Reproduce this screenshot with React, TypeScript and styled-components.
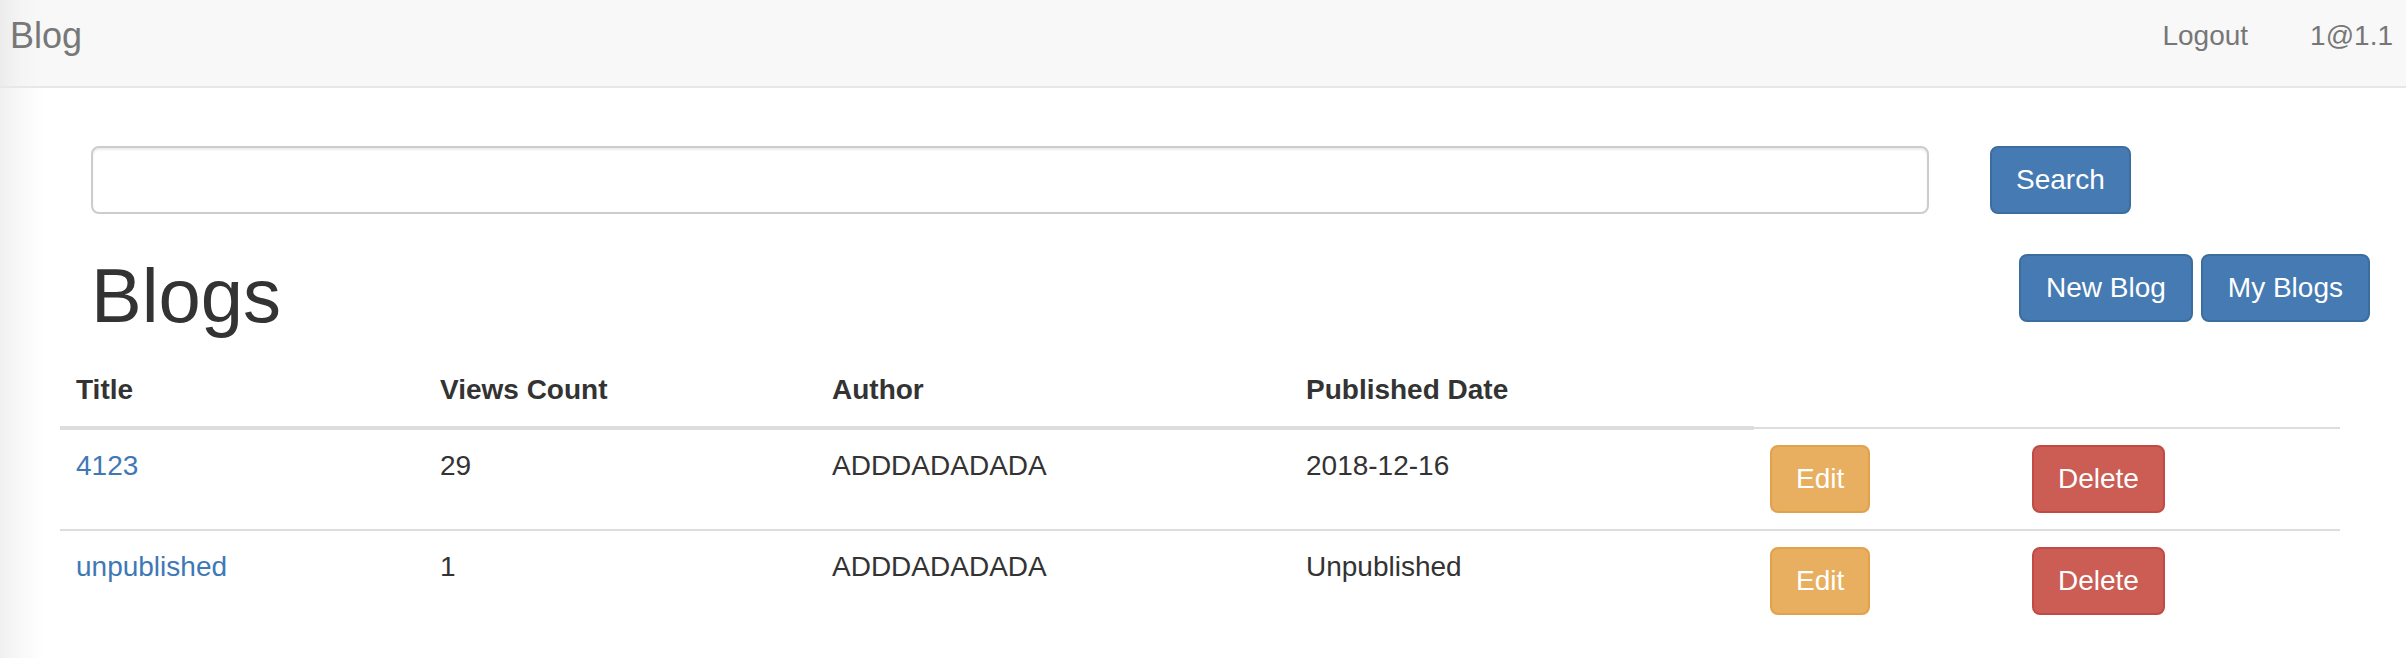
import React from "react";
import styled, { createGlobalStyle } from "styled-components";

const Global = createGlobalStyle`
  * { box-sizing: border-box; }
  html, body { margin: 0; padding: 0; }
  body {
    font-family: "Liberation Sans", Arial, Helvetica, sans-serif;
    font-size: 28px;
    line-height: 40px;
    color: #333;
    min-height: 658px;
    background: linear-gradient(to right, #f0f0f0 0px, #f9f9f9 22px, #ffffff 44px);
  }
`;

const Navbar = styled.nav`
  height: 88px;
  display: flex;
  align-items: flex-start;
  justify-content: space-between;
  padding-top: 16px;
  background: linear-gradient(to right, #ececec 0px, #f5f5f5 22px, #f8f8f8 44px);
  border-bottom: 2px solid #e7e7e7;
`;

const Brand = styled.a`
  margin-left: 10px;
  font-size: 36px;
  line-height: 40px;
  color: #777;
  text-decoration: none;
`;

const NavLinks = styled.div`
  display: flex;
  gap: 62px;
  margin-right: 13px;
`;

const NavLink = styled.a`
  color: #777;
  text-decoration: none;
  font-size: 28px;
  line-height: 40px;
`;

const Main = styled.main`
  padding: 0 36px 0 60px;
`;

const SearchRow = styled.form`
  display: flex;
  align-items: flex-start;
  margin: 58px 0 0 31px;
`;

const SearchInput = styled.input`
  width: 1838px;
  height: 68px;
  padding: 12px 24px;
  font: inherit;
  color: #555;
  background: #fff;
  border: 2px solid #ccc;
  border-radius: 8px;
  box-shadow: inset 0 2px 2px rgba(0, 0, 0, 0.075);
  outline: none;
`;

const variants = {
  primary: { bg: "#457ab3", border: "#3c6d9f" },
  warning: { bg: "#e7af5f", border: "#e2a24c" },
  danger: { bg: "#cb5d55", border: "#c14b44" },
};

const Button = styled.button<{ $kind: keyof typeof variants; $pad?: number }>`
  display: inline-block;
  vertical-align: top;
  height: 68px;
  padding: 12px ${(p) => p.$pad ?? 24}px;
  font-family: inherit;
  font-size: 28px;
  line-height: 40px;
  color: #fff;
  white-space: nowrap;
  background: ${(p) => variants[p.$kind].bg};
  border: 2px solid ${(p) => variants[p.$kind].border};
  border-radius: 8px;
  cursor: pointer;
`;

const SearchButton = styled(Button)`
  margin-left: 61px;
`;

const HeadRow = styled.div`
  display: flex;
  align-items: flex-start;
  justify-content: space-between;
  margin-top: 40px;
`;

const Title = styled.h1`
  margin: 1px 0 0 31px;
  font-size: 76px;
  line-height: 82px;
  font-weight: 500;
  color: #333;
`;

const Actions = styled.div`
  display: flex;
  gap: 8px;
`;

const Table = styled.table`
  margin-top: 17px;
  width: 2280px;
  table-layout: fixed;
  border-collapse: collapse;
`;

const Th = styled.th`
  padding: 16px;
  text-align: left;
  font-weight: bold;
  line-height: 40px;
  vertical-align: bottom;
  border-bottom: 4px solid #ddd;
`;

const Td = styled.td`
  padding: 16px;
  line-height: 40px;
  vertical-align: top;
  border-top: 2px solid #ddd;
`;

const Link = styled.a`
  color: #3f79b5;
  text-decoration: none;
`;

const rows = [
  { title: "4123", views: 29, author: "ADDDADADADA", date: "2018-12-16" },
  { title: "unpublished", views: 1, author: "ADDDADADADA", date: "Unpublished" },
];

const widths = [364, 392, 474, 464, 262, 324];

export default function App() {
  return (
    <>
      <Global />
      <Navbar>
        <Brand href="#">Blog</Brand>
        <NavLinks>
          <NavLink href="#">Logout</NavLink>
          <NavLink href="#">1@1.1</NavLink>
        </NavLinks>
      </Navbar>
      <Main>
        <SearchRow onSubmit={(e) => e.preventDefault()}>
          <SearchInput type="text" />
          <SearchButton $kind="primary" type="submit">
            Search
          </SearchButton>
        </SearchRow>
        <HeadRow>
          <Title>Blogs</Title>
          <Actions>
            <Button $kind="primary" $pad={25}>New Blog</Button>
            <Button $kind="primary" $pad={25}>My Blogs</Button>
          </Actions>
        </HeadRow>
        <Table>
          <colgroup>
            {widths.map((w, i) => (
              <col key={i} style={{ width: w }} />
            ))}
          </colgroup>
          <thead>
            <tr>
              <Th>Title</Th>
              <Th>Views Count</Th>
              <Th>Author</Th>
              <Th>Published Date</Th>
            </tr>
          </thead>
          <tbody>
            {rows.map((r) => (
              <tr key={r.title}>
                <Td>
                  <Link href="#">{r.title}</Link>
                </Td>
                <Td>{r.views}</Td>
                <Td>{r.author}</Td>
                <Td>{r.date}</Td>
                <Td>
                  <Button $kind="warning">Edit</Button>
                </Td>
                <Td>
                  <Button $kind="danger">Delete</Button>
                </Td>
              </tr>
            ))}
          </tbody>
        </Table>
      </Main>
    </>
  );
}
